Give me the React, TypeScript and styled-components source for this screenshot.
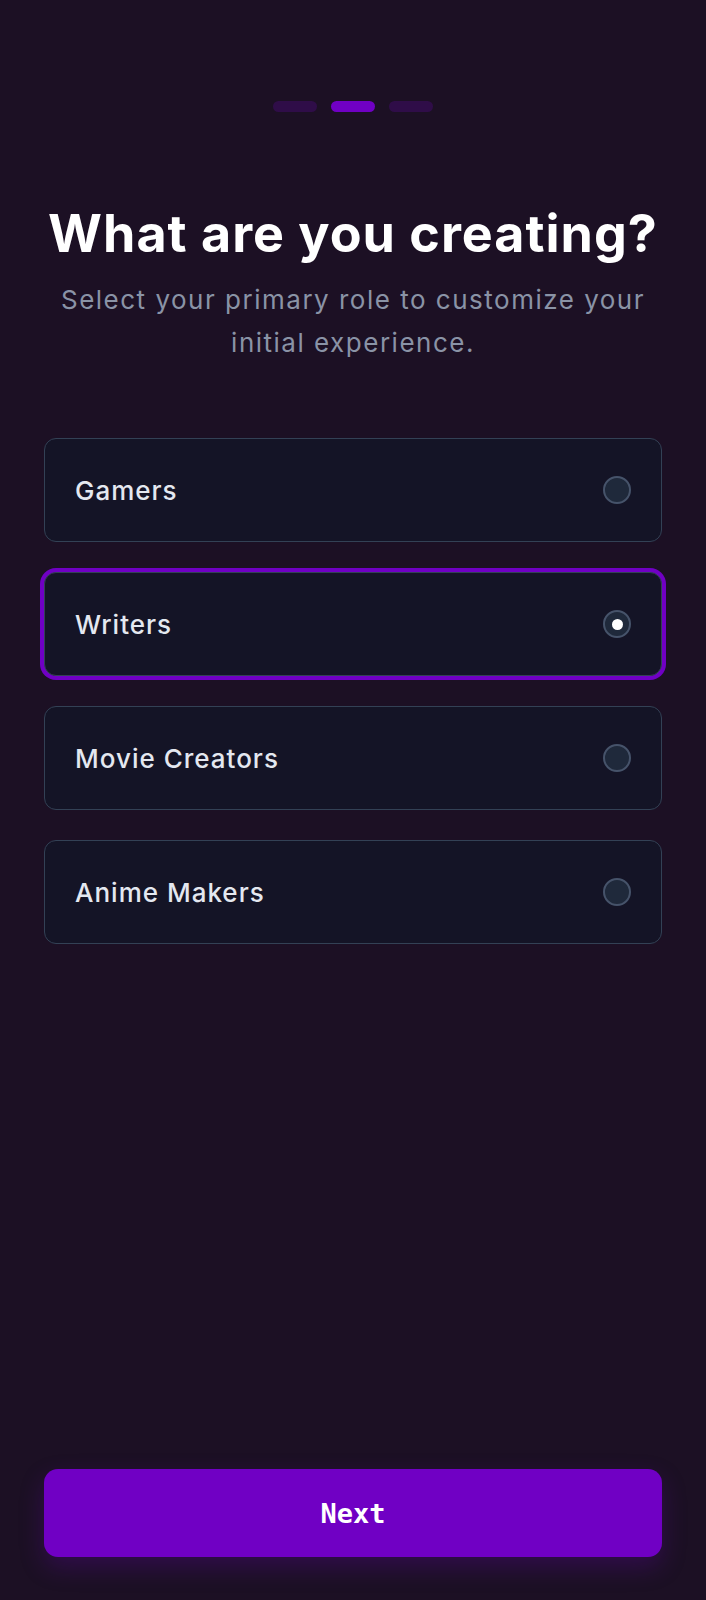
import { useState } from "react"
import styled, { createGlobalStyle } from "styled-components"

const roles = ["Gamers", "Writers", "Movie Creators", "Anime Makers"]

const GlobalStyle = createGlobalStyle`
    html, body {
        margin: 0;
        padding: 0;
        background: #1c1024;
    }
    * {
        box-sizing: border-box;
    }
`

export default function App() {
    const [selected, setSelected] = useState(1)

    return (
        <>
            <GlobalStyle />
            <Screen>
                <Steps>
                    <Step />
                    <Step $active />
                    <Step />
                </Steps>

                <Heading>
                    <Title>What are you creating?</Title>
                    <Subtitle>Select your primary role to customize your initial experience.</Subtitle>
                </Heading>

                <Options>
                    {roles.map((role, i) => (
                        <Option key={role} $selected={selected === i} onClick={() => setSelected(i)}>
                            <OptionLabel>{role}</OptionLabel>
                            <Radio $checked={selected === i} />
                        </Option>
                    ))}
                </Options>

                <NextButton>Next</NextButton>
            </Screen>
        </>
    )
}

const Screen = styled.div`
    min-height: 1600px;
    display: flex;
    flex-direction: column;
    padding: 101px 44px 43px;
    font-family: Inter, "Noto Sans", sans-serif;
`

const Steps = styled.div`
    display: flex;
    justify-content: center;
    gap: 14px;
`

const Step = styled.div<{ $active?: boolean }>`
    width: 44px;
    height: 11px;
    border-radius: 6px;
    background: ${({ $active }) => ($active ? "#7000c4" : "#2f0d48")};
`

const Heading = styled.div`
    display: flex;
    flex-direction: column;
    align-items: center;
    text-align: center;
    margin-top: 90px;
    gap: 12px;
`

const Title = styled.h1`
    margin: 0;
    font-size: 52px;
    line-height: 64px;
    font-weight: 700;
    color: #ffffff;
    letter-spacing: 1px;
    white-space: nowrap;
`

const Subtitle = styled.p`
    margin: 0;
    max-width: 600px;
    font-size: 26px;
    line-height: 43px;
    font-weight: 400;
    color: #8a93a6;
    letter-spacing: 1.5px;
`

const Options = styled.div`
    display: flex;
    flex-direction: column;
    gap: 30px;
    margin-top: 74px;
`

const Option = styled.div<{ $selected?: boolean }>`
    height: 104px;
    display: flex;
    align-items: center;
    justify-content: space-between;
    padding: 0 30px;
    border-radius: 12px;
    background: #141426;
    border: 1.5px solid #334155;
    box-shadow: ${({ $selected }) => ($selected ? "0 0 0 4px #7000c4" : "none")};
    cursor: pointer;
`

const OptionLabel = styled.span`
    font-size: 26px;
    font-weight: 500;
    color: #e4e8f0;
    letter-spacing: 1px;
`

const Radio = styled.span<{ $checked?: boolean }>`
    width: 28px;
    height: 28px;
    border-radius: 50%;
    background: #1f293b;
    border: 2px solid #46536a;
    display: flex;
    align-items: center;
    justify-content: center;

    &::after {
        content: "";
        width: 11px;
        height: 11px;
        border-radius: 50%;
        background: #ffffff;
        display: ${({ $checked }) => ($checked ? "block" : "none")};
    }
`

const NextButton = styled.button`
    margin-top: auto;
    height: 88px;
    border: none;
    border-radius: 14px;
    background: #7000c4;
    color: #ffffff;
    font-family: "DejaVu Sans Mono", "Liberation Mono", monospace;
    font-size: 27px;
    font-weight: 700;
    box-shadow: 0 10px 24px rgba(112, 0, 196, 0.25);
    cursor: pointer;
`
